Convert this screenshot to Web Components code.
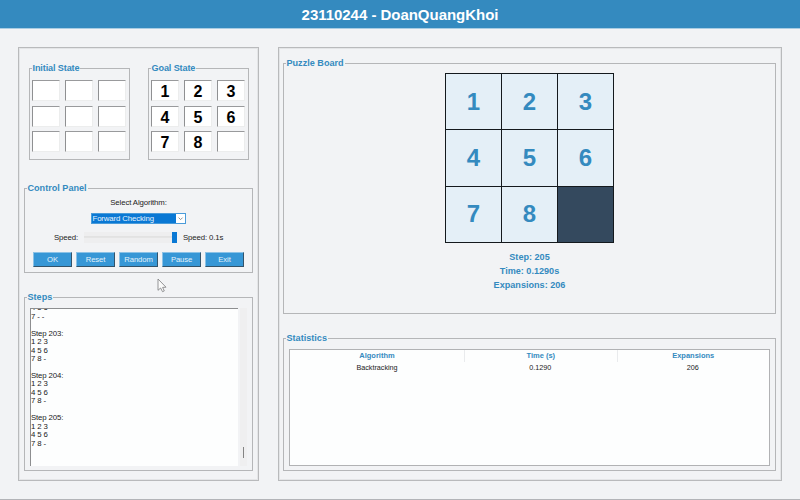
<!DOCTYPE html>
<html lang="en">
<head>
<meta charset="utf-8">
<title>23110244 - DoanQuangKhoi</title>
<style>
html,body{margin:0;height:100%}
body{font-family:"Liberation Sans",Arial,sans-serif;background:#f2f3f5;overflow:hidden}
</style>
</head>
<body>
<puzzle-app></puzzle-app>
<script>
const define = (name, css, html) => customElements.define(name, class extends HTMLElement {
  constructor() {
    super();
    this.attachShadow({mode: 'open'}).innerHTML =
      `<style>*{box-sizing:border-box}:host{box-sizing:border-box}${css}</style>` +
      (typeof html === 'function' ? html(this) : html);
  }
});

define('app-header', `
  :host{display:flex;height:29px;padding-top:1px;align-items:center;justify-content:center;background:#348abf;
    border-bottom:1px solid #a9cde3;color:#fff;font-weight:bold;font-size:15px;line-height:18px;white-space:nowrap;letter-spacing:-.03px}
`, '<slot></slot>');

define('titled-frame', `
  :host{display:block}
  fieldset{width:100%;height:100%;min-width:0;margin:0;padding:0;border:1px solid #b5b6b8}
  legend{height:11px;margin-left:2px;padding:0 1px 0 .5px;font:bold 9.1px/11px "Liberation Sans",Arial,sans-serif;color:#348abf;white-space:nowrap;letter-spacing:var(--ls,0)}
  .body{display:flex;flex-direction:column}
`, el => `<fieldset><legend>${el.getAttribute('label')}</legend><div class="body"><slot></slot></div></fieldset>`);

define('state-grid', `
  :host{display:grid;grid-template-columns:repeat(3,28px);grid-auto-rows:21px;column-gap:5px;row-gap:4.5px;padding:6px 0 0 2px}
  div{background:#fff;border:1px solid #eceded;border-top:1px solid #999a9c;border-left:1px solid #8f9092;
    color:#000;font-weight:bold;font-size:16px;line-height:21px;text-align:center}
`, el => (el.getAttribute('values') || '_________').split('').map(c => `<div>${c === '_' ? '' : c}</div>`).join(''));

define('algo-select', `
  :host{display:flex;width:95px;height:11px;border:1px solid #4a9bd9;background:#fff;font-size:7.8px;line-height:9px;letter-spacing:-.12px}
  span{flex:1;background:#0a78d4;color:#e6f3fd;white-space:nowrap;padding-left:.5px}
  svg{width:9px;height:9px}
`, '<span><slot></slot></span><svg viewBox="0 0 9 9"><path d="M2.6 3.6 4.6 5.6 6.6 3.6" fill="none" stroke="#777" stroke-width=".8"/></svg>');

define('speed-slider', `
  :host{display:flex;align-items:center;justify-content:flex-end;width:93px;height:11px;background:linear-gradient(#eeeeef 4px,#e1e1e1 4px,#e5e5e5 6px,#eeeeef 6px)}
  i{width:5px;height:11px;background:#0a78d4}
`, '<i></i>');

define('action-button', `
  :host{display:flex;align-items:center;justify-content:center;width:39px;height:15px;background:#3797d6;color:#e4f2fb;
    border:1px solid #8cc2e6;border-right-color:#33536a;border-bottom-color:#33536a;font-size:7.7px;line-height:10px;letter-spacing:-.12px}
`, '<slot></slot>');

define('step-log', `
  :host{display:flex;height:158px;margin:5px 5px 0;gap:2px}
  .text{width:210px;overflow:hidden;display:flex;flex-direction:column;justify-content:flex-end;background:#fdfefe;
    border-top:1px solid #8d8e90;border-left:1px solid #8d8e90;padding:0 0 18px;font-size:7.8px;line-height:8.45px;color:#222;white-space:pre;letter-spacing:-.13px}
  .bar{width:7px;background:#efeff0;display:flex;align-items:flex-end;justify-content:center;padding-bottom:8px}
  .bar i{width:1px;height:11px;background:#838383}
`, '<div class="text"><slot></slot></div><div class="bar"><i></i></div>');

define('puzzle-board', `
  :host{display:grid;grid-template-columns:repeat(3,55px);grid-auto-rows:55.33px;gap:1px;width:169px;height:170px;padding:1px;background:#14191d}
  div{display:flex;align-items:center;justify-content:center;background:#e4eff7;color:#348abf;font-weight:bold;font-size:24px;line-height:28px}
  .gap{background:#34495e}
`, el => el.getAttribute('values').split('').map(c => c === '_' ? '<div class="gap"></div>' : `<div>${c}</div>`).join(''));

define('stats-table', `
  :host{display:block;height:117px;margin:5px 5px 0;background:#fdfefe;border:1px solid #b1b2b4;font-size:7.2px;color:#222;text-align:center}
  .row{display:grid;grid-template-columns:174px 152.5px 1fr;line-height:12px;height:12px}
  .head{color:#348abf;font-weight:bold;font-size:7.5px;line-height:11px}
  .head span+span{border-left:1px solid #e9ebed}
`, `<div class="row head"><span>Algorithm</span><span>Time (s)</span><span>Expansions</span></div>
    <div class="row"><span>Backtracking</span><span>0.1290</span><span>206</span></div>`);

define('mouse-pointer', `
  :host{position:absolute;left:157px;top:278px;width:11px;height:16px}
  svg{display:block}
`, '<svg width="11" height="16" viewBox="0 0 11 16"><path d="M1 1v11.3l2.6-2.3 1.9 3.7 1.8-.8-1.7-3.5 3.4-.2Z" fill="#fafafa" stroke="#7b7b7d" stroke-width=".8"/></svg>');

define('puzzle-app', `
  :host{display:flex;flex-direction:column;width:800px;height:500px;border-bottom:1px solid #b3b4b8}
  main{display:flex;gap:19px;padding:18px 0 0 18px}
  section{height:434px;border:1px solid #b9babc}
  .left{width:241px;padding:15px 5px 0;box-shadow:inset 0 0 0 1px #e4e5e7}
  .right{width:504px;padding:10px 5px 0 4px;box-shadow:inset 0 0 0 1px #e4e5e7}
  .states{display:flex;justify-content:space-between;padding:0 4px 0 5px;height:97px}
  .states titled-frame{width:101px;--ls:-.12px}
  .control{height:90px;margin-top:23px;font-size:7.8px;line-height:10px;color:#222;letter-spacing:-.12px}
  .center{display:flex;justify-content:center}
  .speed{display:flex;align-items:center;padding:8px 0 0 29px;white-space:nowrap}
  .speed span:first-child{width:24px}
  .speed speed-slider{margin:0 6px 0 6px}
  .buttons{display:flex;gap:4px;padding:9px 0 0 8px}
  .steps{height:179px;margin-top:19px}
  .board{height:256px}
  .board puzzle-board{margin:4px auto 0}
  .info{display:flex;flex-direction:column;align-items:center;padding-top:7px;font-weight:bold;font-size:9.1px;line-height:14px;color:#348abf}
  .stats{height:138px;margin-top:19px}
`, `
  <app-header>23110244 - DoanQuangKhoi</app-header>
  <main>
    <section class="left">
      <div class="states">
        <titled-frame label="Initial State"><state-grid></state-grid></titled-frame>
        <titled-frame label="Goal State"><state-grid values="12345678_"></state-grid></titled-frame>
      </div>
      <titled-frame class="control" label="Control Panel">
        <div class="center" style="padding-top:4px">Select Algorithm:</div>
        <div class="center" style="padding-top:5px"><algo-select>Forward Checking</algo-select></div>
        <div class="speed"><span>Speed:</span><speed-slider></speed-slider><span>Speed: 0.1s</span></div>
        <div class="buttons"><action-button>OK</action-button><action-button>Reset</action-button><action-button>Random</action-button><action-button>Pause</action-button><action-button>Exit</action-button></div>
      </titled-frame>
      <titled-frame class="steps" label="Steps"><step-log>4 5 6
7 - -

Step 203:
1 2 3
4 5 6
7 8 -

Step 204:
1 2 3
4 5 6
7 8 -

Step 205:
1 2 3
4 5 6
7 8 -</step-log></titled-frame>
    </section>
    <section class="right">
      <titled-frame class="board" label="Puzzle Board">
        <puzzle-board values="12345678_"></puzzle-board>
        <div class="info"><span>Step: 205</span><span>Time: 0.1290s</span><span>Expansions: 206</span></div>
      </titled-frame>
      <titled-frame class="stats" label="Statistics"><stats-table></stats-table></titled-frame>
    </section>
  </main>
  <mouse-pointer></mouse-pointer>
`);
</script>
</body>
</html>
